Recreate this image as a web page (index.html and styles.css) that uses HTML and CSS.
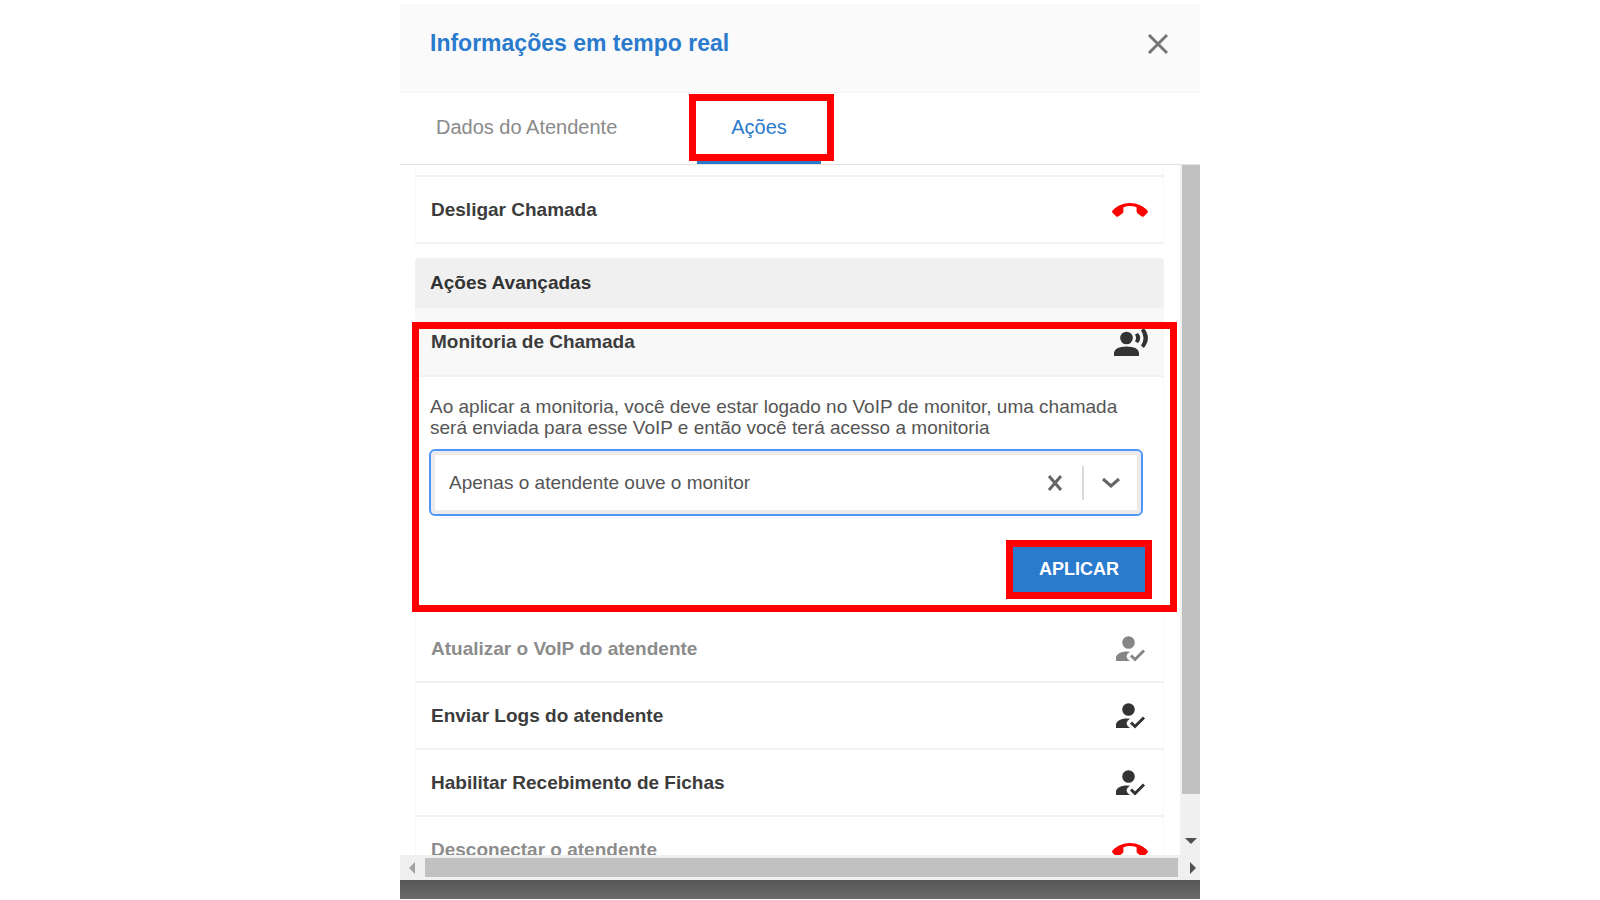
FILE: index.html
```
<!DOCTYPE html>
<html lang="pt-BR">
<head>
    <meta charset="UTF-8">
    <meta name="viewport" content="width=device-width, initial-scale=1.0">
    <title>Informações em tempo real</title>
    <link rel="stylesheet" href="styles.css">
</head>
<body>
    <!-- Shared icons -->
    <svg class="icon-defs" aria-hidden="true">
        <symbol id="icon-hangup" viewBox="0 0 36 14">
            <path d="M18 0C11 0 5 3 1 7Q-.6 8.600 .8 10L4 13.200Q5.300 14.300 7 13L10.500 10.300Q11.400 9.500 11.400 8.200V4.200Q14.500 3 18 3T24.600 4.200V8.200Q24.600 9.500 25.500 10.300L29 13Q30.700 14.300 32 13.200L35.200 10Q36.600 8.600 35 7C31 3 25 0 18 0Z"/>
        </symbol>
        <symbol id="icon-user-check" viewBox="0 0 30 26">
            <circle cx="12.500" cy="6.500" r="6.300"/>
            <path d="M0 25V21Q1 16.500 9 15.500Q12 15.200 14 15.800Q10.500 18 10.500 20.500Q10.800 23 14 25Z"/>
            <path d="M15 19.500L19 23.500L28 14.500" fill="none" stroke="currentColor" stroke-width="3"/>
        </symbol>
        <symbol id="icon-voice" viewBox="0 0 34 28">
            <circle cx="12.500" cy="10" r="6.300"/>
            <path d="M0 28V24.500Q1 18.500 12.500 18.500T25 24.500V28Z"/>
            <path d="M21 6.500L24 5Q28.500 10 24 15L21 13.500Q23 10 21 6.500Z"/>
            <path d="M27 2.500L29.800 0Q38 10 29.800 20L27 17.500Q32 10 27 2.500Z"/>
        </symbol>
    </svg>

    <main class="modal">
        <header class="modal-header">
            <h1>Informações em tempo real</h1>
            <button type="button" class="close-btn" aria-label="Fechar">
                <svg width="22" height="22" viewBox="0 0 22 22"><path d="M2 2L20 20M20 2L2 20"/></svg>
            </button>
        </header>

        <nav class="tabs">
            <button type="button" class="tab">Dados do Atendente</button>
            <button type="button" class="tab active highlight">Ações</button>
        </nav>

        <div class="modal-body">
            <div class="content">
                <div class="item previous"></div>
                <div class="item last">
                    <h3>Desligar Chamada</h3>
                    <svg class="hangup"><use href="#icon-hangup"/></svg>
                </div>

                <h2>Ações Avançadas</h2>

                <!-- Call monitoring -->
                <section class="monitor highlight">
                    <div class="item open">
                        <h3>Monitoria de Chamada</h3>
                        <svg class="voice"><use href="#icon-voice"/></svg>
                    </div>
                    <form class="monitor-form">
                        <label for="monitor-mode">Ao aplicar a monitoria, você deve estar logado no VoIP de monitor, uma chamada será enviada para esse VoIP e então você terá acesso a monitoria</label>
                        <div class="select-box">
                            <select id="monitor-mode">
                                <option>Apenas o atendente ouve o monitor</option>
                            </select>
                            <button type="button" class="clear-btn" aria-label="Limpar">
                                <svg width="16" height="16" viewBox="0 0 16 16"><path d="M2 1L14 15M14 1L2 15"/></svg>
                            </button>
                            <span class="divider"></span>
                            <svg class="chevron" width="18" height="12" viewBox="0 0 18 12"><path d="M1 2L9 9L17 2"/></svg>
                        </div>
                        <button type="button" class="apply-btn highlight">APLICAR</button>
                    </form>
                </section>

                <div class="item disabled">
                    <h3>Atualizar o VoIP do atendente</h3>
                    <svg class="user"><use href="#icon-user-check"/></svg>
                </div>
                <div class="item">
                    <h3>Enviar Logs do atendente</h3>
                    <svg class="user"><use href="#icon-user-check"/></svg>
                </div>
                <div class="item">
                    <h3>Habilitar Recebimento de Fichas</h3>
                    <svg class="user"><use href="#icon-user-check"/></svg>
                </div>
                <div class="item disabled">
                    <h3>Desconectar o atendente</h3>
                    <svg class="hangup"><use href="#icon-hangup"/></svg>
                </div>
            </div>

            <div class="scroll-y">
                <div class="thumb"></div>
                <svg width="12" height="6" viewBox="0 0 12 6"><path d="M0 0H12L6 6Z"/></svg>
            </div>
            <div class="scroll-x">
                <svg class="left" width="6" height="12" viewBox="0 0 6 12"><path d="M6 0V12L0 6Z"/></svg>
                <div class="thumb"></div>
                <svg width="6" height="12" viewBox="0 0 6 12"><path d="M0 0V12L6 6Z"/></svg>
            </div>
        </div>
    </main>
    <div class="backdrop"></div>
</body>
</html>
```
FILE: styles.css
```
* {
    margin: 0;
    padding: 0;
    box-sizing: border-box;
}

body {
    display: flex;
    flex-direction: column;
    align-items: center;
    height: 100vh;
    padding: 4px 0 1px;
    overflow: hidden;
    background: #fff;
    color: #333;
    font-family: "Liberation Sans", Arial, sans-serif;
    font-size: 19px;
}

button {
    border: none;
    background: none;
    font-family: inherit;
    cursor: pointer;
}

.icon-defs {
    position: absolute;
    width: 0;
    height: 0;
}

.modal {
    display: flex;
    flex-direction: column;
    flex: 1;
    min-height: 0;
    width: 50%;
}

.modal-header {
    display: flex;
    justify-content: space-between;
    align-items: center;
    height: 89px;
    padding: 0 31px 9px 30px;
    background: #fafafa;
    border-bottom: 1px solid #eef4f9;
}

h1 {
    font-size: 23px;
    color: #2a7acd;
}

.close-btn {
    display: flex;
}

.close-btn path {
    stroke: #757575;
    stroke-width: 3;
}

/* Red marker frame */
.highlight {
    position: relative;
}

.highlight::after {
    content: "";
    position: absolute;
    border: 7px solid #f00;
    pointer-events: none;
}

.tabs {
    display: flex;
    gap: 44px;
    height: 72px;
    border-bottom: 1px solid #e2e2e2;
}

.tab {
    padding: 0 36px 2px;
    font-size: 20px;
    color: #8a8a8a;
}

.tab.active {
    color: #2a7acd;
    border-bottom: 3px solid #2a7acd;
    padding: 0 34px;
}

.tab.highlight::after {
    inset: 1px -13px 0 -8px;
}

.modal-body {
    display: grid;
    grid-template-columns: 1fr 20px;
    grid-template-rows: 1fr 25px;
    flex: 1;
    min-height: 0;
}

.content {
    min-height: 0;
    overflow: hidden;
    padding: 0 16px 0 15px;
}

.item {
    display: flex;
    justify-content: space-between;
    align-items: center;
    height: 67px;
    padding: 0 15px;
    border: 1px solid #f8f8f8;
    border-top: none;
    border-bottom: 2px solid #f2f2f2;
}

.item.previous {
    height: 12px;
}

.item.open {
    height: 69px;
    background: #f8f8f8;
}

h2,
h3 {
    font-size: 19px;
}

h3 {
    color: #3c3c3c;
}

h2 {
    height: 50px;
    margin-top: 14px;
    padding: 0 15px;
    line-height: 49px;
    color: #333;
    background: #f0f0f0;
    border-radius: 4px 4px 0 0;
}

.item svg {
    fill: currentColor;
}

.item .hangup {
    width: 36px;
    height: 14px;
    color: #f00;
}

.item .user {
    width: 30px;
    height: 26px;
    margin-right: 2px;
}

.item .voice {
    width: 34px;
    height: 28px;
}

.item.disabled h3 {
    color: #8c8c8c;
}

.item.disabled .user {
    color: #868686;
}

.monitor.highlight::after {
    inset: 14px -13px 4px -3px;
}

.monitor-form {
    display: flex;
    flex-direction: column;
    padding: 19px 20px 24px 14px;
    border: 1px solid #f8f8f8;
    border-width: 0 1px;
}

label {
    line-height: 21px;
    color: #555;
    margin-bottom: 11px;
}

.select-box {
    display: flex;
    align-items: center;
    height: 67px;
    padding: 0 21px 0 14px;
    margin-left: -1px;
    border: 2px solid #4c97f7;
    border-radius: 6px;
    box-shadow: inset 0 0 0 4px #ebebeb;
}

select {
    flex: 1;
    height: 100%;
    margin: 0 4px;
    appearance: none;
    border: none;
    outline: none;
    background: none;
    font-family: inherit;
    font-size: 19px;
    color: #555;
}

.select-box .clear-btn {
    display: flex;
}

.select-box path {
    fill: none;
    stroke: #666;
    stroke-width: 3;
}

.divider {
    width: 2px;
    height: 34px;
    margin: 0 18px 0 19px;
    background: #d9d9d9;
}

.apply-btn {
    align-self: flex-end;
    width: 132px;
    height: 45px;
    margin: 31px -2px 0 0;
    background: #2a7acd;
    color: #fff;
    font-size: 18px;
    font-weight: bold;
}

.apply-btn.highlight::after {
    inset: -7px;
}

/* Scrollbars */
.scroll-y,
.scroll-x {
    display: flex;
    align-items: center;
    background: #f0f0f0;
    fill: #505050;
}

.scroll-y {
    flex-direction: column;
    padding: 0 0 11px 2px;
}

.scroll-y .thumb {
    flex: 1;
    width: 100%;
    margin-bottom: 44px;
    background: #c1c1c1;
}

.scroll-x {
    grid-column: 1 / 3;
    padding: 0 4px 0 9px;
}

.scroll-x .thumb {
    flex: 1;
    height: 19px;
    margin: 0 12px 0 10px;
    background: #c1c1c1;
}

.scroll-x .left {
    fill: #a3a3a3;
}

.backdrop {
    width: 50%;
    height: 19px;
    background: linear-gradient(#565656, #6b6b6b);
}
```
